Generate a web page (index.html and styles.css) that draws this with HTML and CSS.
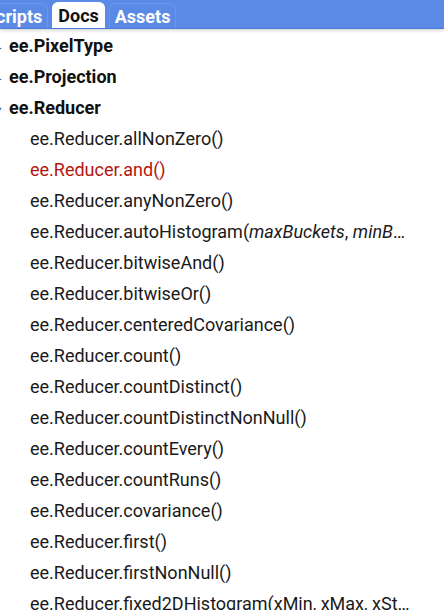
FILE: index.html
```html
<!DOCTYPE html>
<html>
<head>
<meta charset="utf-8">
<link rel="stylesheet" href="styles.css">
</head>
<body>
<div class="tabbar">
  <div class="tab tab-scripts">Scripts</div>
  <div class="tab tab-active">Docs</div>
  <div class="tab">Assets</div>
</div>
<ul class="tree">
  <li class="group collapsed"><span class="caret">▸</span>ee.PixelType</li>
  <li class="group collapsed"><span class="caret">▸</span>ee.Projection</li>
  <li class="group"><span class="caret">▾</span>ee.Reducer</li>
  <li class="item">ee.Reducer.allNonZero()</li>
  <li class="item selected">ee.Reducer.and()</li>
  <li class="item">ee.Reducer.anyNonZero()</li>
  <li class="item">ee.Reducer.autoHistogram(<i>maxBuckets</i>, <i>minBucketWidth</i>, <i>maxRaw</i>)</li>
  <li class="item">ee.Reducer.bitwiseAnd()</li>
  <li class="item">ee.Reducer.bitwiseOr()</li>
  <li class="item">ee.Reducer.centeredCovariance()</li>
  <li class="item">ee.Reducer.count()</li>
  <li class="item">ee.Reducer.countDistinct()</li>
  <li class="item">ee.Reducer.countDistinctNonNull()</li>
  <li class="item">ee.Reducer.countEvery()</li>
  <li class="item">ee.Reducer.countRuns()</li>
  <li class="item">ee.Reducer.covariance()</li>
  <li class="item">ee.Reducer.first()</li>
  <li class="item">ee.Reducer.firstNonNull()</li>
  <li class="item">ee.Reducer.fixed2DHistogram(xMin, xMax, xSteps, yMin, yMax, ySteps)</li>
</ul>
</body>
</html>
```
FILE: styles.css
```css
html, body {
  margin: 0;
  padding: 0;
  background: #ffffff;
  overflow: hidden;
}
body {
  font-family: Roboto, "Liberation Sans", sans-serif;
  color: #1a1a1a;
}
.tabbar {
  position: relative;
  z-index: 1;
  height: 28px;
  background: #5a8ae6;
  border-bottom: 1px solid #4a7bd8;
  box-shadow: 0 1px 4px rgba(0,0,0,0.22);
  display: flex;
  align-items: flex-end;
  gap: 4px;
  overflow: hidden;
}
.tab {
  height: 24px;
  line-height: 25px;
  padding: 0 5px;
  font-size: 18px;
  font-weight: 700;
  color: #ffffff;
  border: 1px solid #6b97ea;
  border-bottom: none;
  border-radius: 6px 6px 0 0;
  background: #5a8ae6;
}
.tab-scripts {
  margin-left: -21px;
}
.tab-active {
  background: #ffffff;
  color: #111111;
  border-color: #ffffff;
  height: 25px;
}
.tree {
  list-style: none;
  margin: 0;
  padding: 1px 0 0 0;
}
.tree li {
  height: 31px;
  line-height: 31px;
  font-size: 18px;
  white-space: nowrap;
  overflow: hidden;
  text-overflow: ellipsis;
}
.group {
  font-weight: 700;
  padding-left: 0;
  color: #111;
}
.caret {
  display: inline-block;
  width: 9px;
  margin-left: -4px;
  margin-right: 4px;
  font-size: 10px;
  color: #444;
  vertical-align: 1px;
}
.item {
  padding-left: 30px;
  padding-right: 32px;
  color: #1a1a1a;
}
.item.selected {
  color: #b5160f;
}
```
